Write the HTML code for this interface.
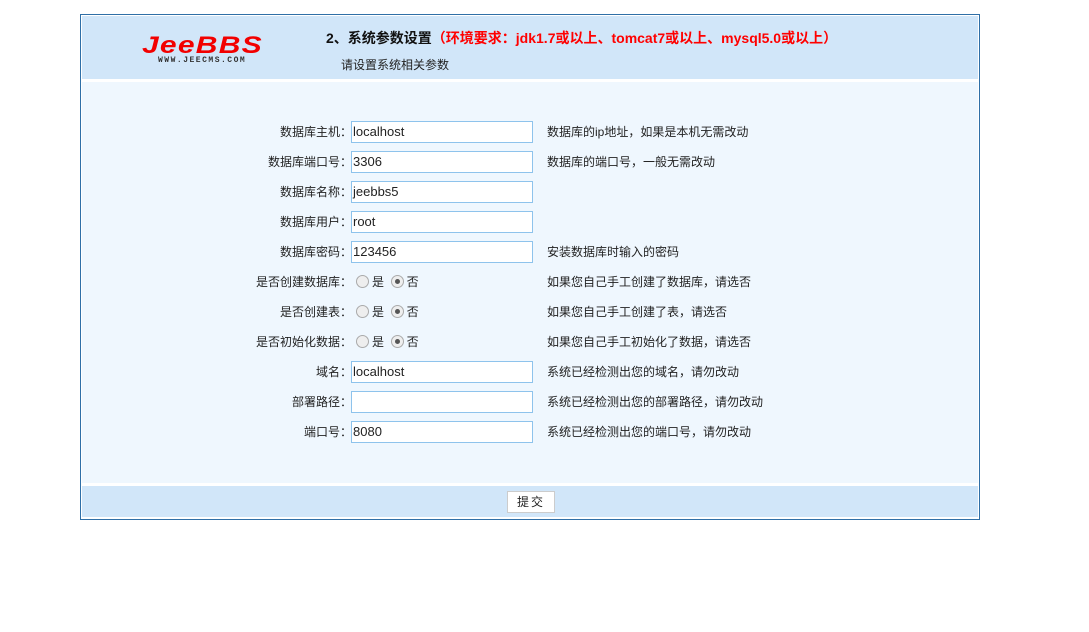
<!DOCTYPE html>
<html><head><meta charset="utf-8"><style>
*{margin:0;padding:0;box-sizing:border-box}
body{width:1089px;height:632px;background:#fff;font-family:"Liberation Sans","Noto Sans CJK SC",sans-serif;font-size:12px;color:#222;position:relative}
.box{position:absolute;left:80px;top:14px;width:900px;height:506px;border:1px solid #2f6fa7;background:#fff}
.hd{position:absolute;left:1px;top:1px;width:896px;height:63px;background:#d1e6f9}
.bd{position:absolute;left:1px;top:67px;width:896px;height:401px;background:#eff7fe}
.ft{position:absolute;left:1px;top:471px;width:896px;height:31px;background:#d1e6f9}
.logo{position:absolute;left:60px;top:16px;color:#f20000;font:italic 900 24px "Liberation Sans",sans-serif;letter-spacing:1px;transform:scaleX(1.25);transform-origin:left}
.www{position:absolute;left:76px;top:40px;font:bold 8px "Liberation Mono",monospace;letter-spacing:1.5px;color:#333}
.t1{position:absolute;left:244px;top:12px;font-weight:bold;font-size:14px;color:#111}
.t1 span{color:#f00}
.t2{position:absolute;left:259px;top:40px;font-size:12px}
.row{position:absolute;left:0;height:22px;width:896px}
.lb{position:absolute;right:626px;top:2px;white-space:nowrap}
.in{position:absolute;left:269px;top:0;width:182px;height:22px;border:1px solid #8ec3ec;background:#fff;font-size:13px;padding:2px 0 0 1px}
.hint{position:absolute;left:465px;top:2px;white-space:nowrap}
.rd{position:absolute;left:274px;top:2px;white-space:nowrap}
.r{display:inline-block;width:13px;height:13px;border:1px solid #aaa;border-radius:50%;background:#eee;vertical-align:-2px;margin-right:3px;position:relative}
.r.on::after{content:"";position:absolute;left:3px;top:3px;width:5px;height:5px;border-radius:50%;background:#555}
.btn{position:absolute;left:425px;top:5px;width:48px;height:22px;border:1px solid #ccc;background:#fff;text-align:center;line-height:20px;font-size:12px;letter-spacing:2px}
</style></head><body>
<div class="box">
<div class="hd"><div class="logo">JeeBBS</div><div class="www">WWW.JEECMS.COM</div>
<div class="t1">2、系统参数设置<span>（环境要求：jdk1.7或以上、tomcat7或以上、mysql5.0或以上）</span></div>
<div class="t2">请设置系统相关参数</div></div>
<div class="bd">
<div class="row" style="top:39px"><span class="lb">数据库主机：</span><div class="in">localhost</div><span class="hint">数据库的ip地址，如果是本机无需改动</span></div>
<div class="row" style="top:69px"><span class="lb">数据库端口号：</span><div class="in">3306</div><span class="hint">数据库的端口号，一般无需改动</span></div>
<div class="row" style="top:99px"><span class="lb">数据库名称：</span><div class="in">jeebbs5</div></div>
<div class="row" style="top:129px"><span class="lb">数据库用户：</span><div class="in">root</div></div>
<div class="row" style="top:159px"><span class="lb">数据库密码：</span><div class="in">123456</div><span class="hint">安装数据库时输入的密码</span></div>
<div class="row" style="top:189px"><span class="lb">是否创建数据库：</span><span class="rd"><i class="r"></i>是 &nbsp;<i class="r on"></i>否</span><span class="hint">如果您自己手工创建了数据库，请选否</span></div>
<div class="row" style="top:219px"><span class="lb">是否创建表：</span><span class="rd"><i class="r"></i>是 &nbsp;<i class="r on"></i>否</span><span class="hint">如果您自己手工创建了表，请选否</span></div>
<div class="row" style="top:249px"><span class="lb">是否初始化数据：</span><span class="rd"><i class="r"></i>是 &nbsp;<i class="r on"></i>否</span><span class="hint">如果您自己手工初始化了数据，请选否</span></div>
<div class="row" style="top:279px"><span class="lb">域名：</span><div class="in">localhost</div><span class="hint">系统已经检测出您的域名，请勿改动</span></div>
<div class="row" style="top:309px"><span class="lb">部署路径：</span><div class="in"></div><span class="hint">系统已经检测出您的部署路径，请勿改动</span></div>
<div class="row" style="top:339px"><span class="lb">端口号：</span><div class="in">8080</div><span class="hint">系统已经检测出您的端口号，请勿改动</span></div>
</div>
<div class="ft"><div class="btn">提交</div></div>
</div>
</body></html>
